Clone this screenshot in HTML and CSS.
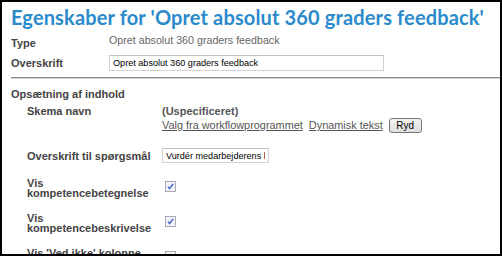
FILE: index.html
```html
<!DOCTYPE html>
<html lang="da">
<head>
<meta charset="utf-8">
<title>Egenskaber</title>
<link rel="stylesheet" href="styles.css">
</head>
<body>
<div class="frame">
  <h1 class="title">Egenskaber for 'Opret absolut 360 graders feedback'</h1>
  <div class="props">
    <div class="lbl lbl-type">Type</div>
    <div class="val">Opret absolut 360 graders feedback</div>
    <div class="lbl lbl-ovs">Overskrift</div>
    <div class="cell"><input class="txt txt-wide" type="text" value="Opret absolut 360 graders feedback"></div>
  </div>
  <hr class="sep">
  <h2 class="section">Opsætning af indhold</h2>
  <div class="settings">
    <div class="lbl">Skema navn</div>
    <div class="cell">
      <div class="unspec">(Uspecificeret)</div>
      <div class="links">
        <a class="lnk" href="#">Valg fra workflowprogrammet</a>
        <a class="lnk" href="#">Dynamisk tekst</a>
        <button class="btn" type="button">Ryd</button>
      </div>
    </div>

    <div class="lbl lbl-q row-q">Overskrift til spørgsmål</div>
    <div class="cell row-q"><input class="txt txt-narrow" type="text" value="Vurdér medarbejderens kompetencer"></div>

    <div class="lbl lbl-vis row-vis">Vis kompetencebetegnelse</div>
    <div class="cell row-vis"><span class="cb"><svg width="11" height="11" viewBox="0 0 11 11"><rect x="0.5" y="0.5" width="10" height="10" fill="#f3f3f6" stroke="#a9aab5"/><path d="M3 5.6 L4.6 7.6 L8.1 2.9" stroke="#3d5fc0" stroke-width="1.4" fill="none"/></svg></span></div>

    <div class="lbl lbl-vis row-vis">Vis kompetencebeskrivelse</div>
    <div class="cell row-vis"><span class="cb"><svg width="11" height="11" viewBox="0 0 11 11"><rect x="0.5" y="0.5" width="10" height="10" fill="#f3f3f6" stroke="#a9aab5"/><path d="M3 5.6 L4.6 7.6 L8.1 2.9" stroke="#3d5fc0" stroke-width="1.4" fill="none"/></svg></span></div>

    <div class="lbl lbl-vis row-vis">Vis 'Ved ikke' kolonne</div>
    <div class="cell row-vis"><span class="cb"><svg width="11" height="11" viewBox="0 0 11 11"><rect x="0.5" y="0.5" width="10" height="10" fill="#f3f3f6" stroke="#a9aab5"/></svg></span></div>
  </div>
</div>
</body>
</html>
```

FILE: styles.css
```css
html, body {
  margin: 0;
  padding: 0;
  background: #fff;
}

.frame {
  box-sizing: border-box;
  width: 502px;
  height: 256px;
  border: 2px solid #000;
  overflow: hidden;
  font-family: "Liberation Sans", Arial, sans-serif;
  font-size: 11px;
  color: #444;
}

.title {
  margin: 3px 0 0 9px;
  font-family: Lato, "Liberation Sans", sans-serif;
  font-weight: 700;
  font-size: 20px;
  line-height: 24px;
  letter-spacing: 0.14px;
  color: #2b8acb;
  white-space: nowrap;
}

.props {
  display: grid;
  grid-template-columns: 98px 1fr;
  margin: 4px 0 0 9px;
  align-items: start;
}

.lbl {
  font-weight: 700;
  line-height: 14px;
  color: #444;
}

.lbl-type {
  padding-top: 3px;
}

.val {
  font-size: 10.7px;
  line-height: 14px;
  color: #666;
}

.lbl-ovs {
  margin-top: 5px;
  padding-top: 1px;
}

.cell {
  min-width: 0;
}

.props .cell {
  margin-top: 5px;
}

.txt {
  box-sizing: border-box;
  display: block;
  margin: 0;
  height: 16px;
  padding: 0 3px;
  border: 1px solid #d2d2d2;
  border-top-color: #c2c2c2;
  background: #fff;
  font-family: "Liberation Sans", Arial, sans-serif;
  font-size: 9.1px;
  color: #000;
  outline: none;
}

.txt-wide {
  width: 275px;
}

.txt-narrow {
  width: 107px;
  height: 15px;
  margin-top: 2px;
}

.sep {
  margin: 6px 0 0 9px;
  height: 0;
  border: 0;
  border-top: 1px solid #8c8c8c;
  border-bottom: 1px solid #d4d4d4;
}

.section {
  margin: 8px 0 0 9px;
  font-size: 11px;
  font-weight: 700;
  line-height: 14px;
  color: #444;
}

.settings {
  display: grid;
  grid-template-columns: 135px 1fr;
  margin: 3px 0 0 25px;
  align-items: start;
}

.unspec {
  font-weight: 700;
  line-height: 14px;
  color: #555;
}

.links {
  display: flex;
  align-items: flex-start;
  gap: 6px;
  line-height: 14px;
}

.lnk {
  font-size: 10.9px;
  color: #555;
  text-decoration: underline;
}

.btn {
  width: 33px;
  height: 15px;
  padding: 0;
  border: 1px solid #767676;
  border-radius: 3px;
  background: linear-gradient(#f4f4f4, #dedede);
  font-family: "Liberation Sans", Arial, sans-serif;
  font-size: 10px;
  line-height: 13px;
  color: #000;
}

.row-q {
  margin-top: 13px;
}

.lbl-q {
  margin-top: 13px;
  padding-top: 3px;
}

.row-vis {
  margin-top: 16px;
}

.lbl-vis {
  line-height: 10px;
  padding-right: 4px;
}

.lbl-vis.row-vis {
  margin-top: 15px;
}

.cb {
  display: block;
  width: 11px;
  height: 11px;
  margin: 2px 0 0 3px;
}

.cb svg {
  display: block;
}
```
